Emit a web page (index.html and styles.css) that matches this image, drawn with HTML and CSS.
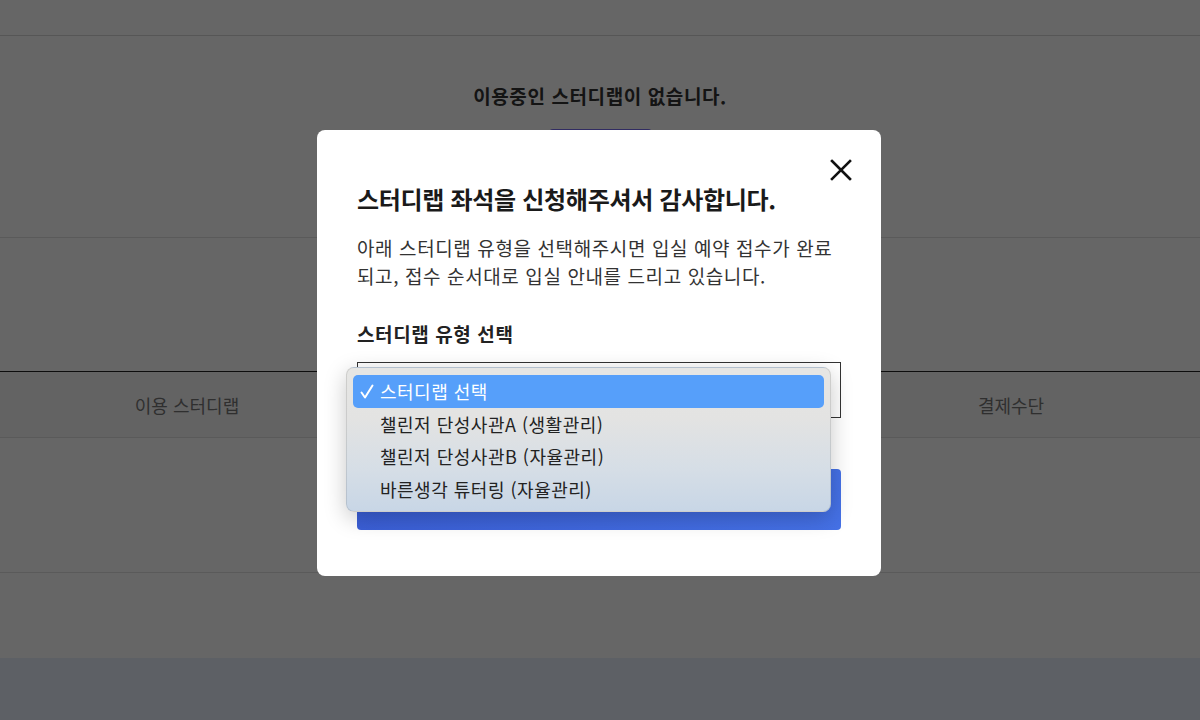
FILE: index.html
```html
<!DOCTYPE html>
<html lang="ko">
<head>
  <meta charset="UTF-8">
  <meta name="viewport" content="width=device-width, initial-scale=1">
  <title>스터디랩 이용현황</title>
  <link rel="stylesheet" href="styles.css">
</head>
<body>
  <div class="top-bar"></div>

  <div class="empty">
    <p class="empty-text">이용중인 스터디랩이 없습니다.</p>
    <button type="button" class="apply-btn">신청하기</button>
  </div>

  <div class="history">
    <div class="table-head">
      <div>이용 스터디랩</div>
      <div>이용기간</div>
      <div>결제금액</div>
      <div>결제수단</div>
    </div>
    <div class="table-body"></div>
  </div>

  <div class="footer"></div>

  <div class="overlay">
    <div class="modal">
      <div class="modal-head">
        <button type="button" class="close-btn" aria-label="닫기">
          <svg width="24" height="24" viewBox="0 0 24 24">
            <path d="M3 3 L21 21 M21 3 L3 21" stroke="#111" stroke-width="2.6" stroke-linecap="square" fill="none"/>
          </svg>
        </button>
      </div>

      <h2>스터디랩 좌석을 신청해주셔서 감사합니다.</h2>
      <p class="desc">아래 스터디랩 유형을 선택해주시면 입실 예약 접수가 완료되고, 접수 순서대로 입실 안내를 드리고 있습니다.</p>

      <b class="label">스터디랩 유형 선택</b>
      <div class="select-wrap">
        <select name="lab-type">
          <option value="">스터디랩 선택</option>
          <option value="a">챌린저 단성사관A (생활관리)</option>
          <option value="b">챌린저 단성사관B (자율관리)</option>
          <option value="c">바른생각 튜터링 (자율관리)</option>
        </select>

        <ul class="popup">
          <li class="selected">
            <svg class="check" width="14" height="16" viewBox="0 0 14 16">
              <path d="M1.5 8.5 L5 13.5 L12.5 1.5" stroke="#fff" stroke-width="2" fill="none" stroke-linecap="round" stroke-linejoin="round"/>
            </svg>
            스터디랩 선택
          </li>
          <li>챌린저 단성사관A (생활관리)</li>
          <li>챌린저 단성사관B (자율관리)</li>
          <li>바른생각 튜터링 (자율관리)</li>
        </ul>
      </div>

      <button type="button" class="submit-btn">신청하기</button>
    </div>
  </div>
</body>
</html>
```

FILE: styles.css
```css
body {
  margin: 0;
  font-family: "Noto Sans CJK KR", "Noto Sans", sans-serif;
  background: #fff;
  color: #333;
}

.top-bar {
  height: 35px;
  border-bottom: 1px solid #d6d6d6;
}

.empty {
  height: 202px;
  border-bottom: 1px solid #e0e0e0;
  display: flex;
  flex-direction: column;
  align-items: center;
  padding-top: 47px;
  box-sizing: border-box;
}

.empty-text {
  margin: 0;
  font-size: 19px;
  line-height: 26px;
  font-weight: bold;
  color: #333;
  letter-spacing: 0.6px;
}

.apply-btn {
  margin-top: 20px;
  width: 103px;
  height: 46px;
  border: none;
  border-radius: 4px;
  background: #7b6ef5;
  color: #fff;
  font-size: 16px;
}

.history {
  margin-top: 133px;
  border-top: 1px solid #222;
}

.table-head {
  display: grid;
  grid-template-columns: 374px 1fr 1fr 378px;
  height: 65px;
  align-items: center;
  text-align: center;
  font-size: 18px;
  color: #777;
  background: #f8f8f8;
  border-bottom: 1px solid #e0e0e0;
}

.table-body {
  height: 134px;
  border-bottom: 1px solid #e0e0e0;
}

.footer {
  margin-top: 85px;
  height: 62px;
  background: #e8f0fc;
}

.overlay {
  position: fixed;
  inset: 0;
  background: rgba(0,0,0,0.6);
  display: flex;
  justify-content: center;
  align-items: flex-start;
  padding-top: 130px;
  padding-right: 2px;
}

.modal {
  width: 564px;
  height: 446px;
  box-sizing: border-box;
  background: #fff;
  border-radius: 8px;
  padding: 28px 40px 0 40px;
}

.modal-head {
  display: flex;
  justify-content: flex-end;
  height: 24px;
}

.close-btn {
  background: none;
  border: none;
  padding: 0;
  width: 24px;
  height: 24px;
  margin-right: -12px;
  cursor: pointer;
}

.modal h2 {
  margin: 1px 0 0;
  font-size: 24px;
  line-height: 32px;
  font-weight: bold;
  color: #1a1a1a;
  letter-spacing: -0.3px;
}

.desc {
  margin: 19px 0 0;
  font-size: 19px;
  line-height: 28px;
  color: #333;
  letter-spacing: 0.6px;
}

.label {
  display: block;
  margin-top: 31px;
  font-size: 19px;
  line-height: 26px;
  color: #222;
  letter-spacing: 0.6px;
}

.select-wrap {
  position: relative;
  margin-top: 15px;
}

.select-wrap select {
  width: 100%;
  height: 56px;
  border: 1px solid #333;
  border-radius: 0;
  background: #fff;
  appearance: none;
  font-family: inherit;
  font-size: 18px;
  padding: 0 20px;
}

.popup {
  position: absolute;
  left: -11px;
  top: 5px;
  width: 485px;
  height: 145px;
  box-sizing: border-box;
  margin: 0;
  padding: 7px 6px;
  list-style: none;
  border-radius: 8px;
  border: 1px solid rgba(0,0,0,0.1);
  background: linear-gradient(180deg, #e6e6e4 0%, #e3e3e2 35%, #d6dee6 70%, #c8d6e6 100%);
  box-shadow: 0 6px 22px rgba(0,0,0,0.22);
}

.popup li {
  height: 32.5px;
  line-height: 32px;
  padding-left: 27px;
  font-size: 18px;
  color: #222;
  letter-spacing: 0.5px;
  position: relative;
}

.popup li.selected {
  background: #569ffa;
  color: #fff;
  border-radius: 5px;
}

.check {
  position: absolute;
  left: 7px;
  top: 9px;
}

.submit-btn {
  display: block;
  width: 100%;
  height: 61px;
  margin-top: 51px;
  border: none;
  border-radius: 4px;
  background: linear-gradient(90deg, #3b5fd6, #4571e6);
  color: #fff;
  font-family: inherit;
  font-size: 18px;
  font-weight: bold;
}
```
